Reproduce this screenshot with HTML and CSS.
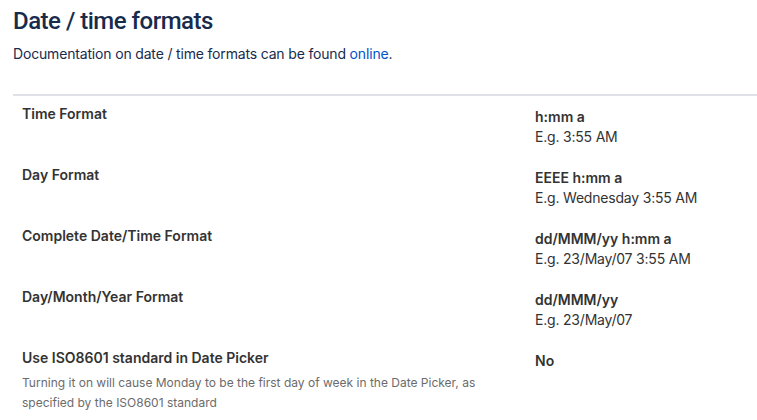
FILE: index.html
```html
<!DOCTYPE html>
<html lang="en">
<head>
<meta charset="utf-8">
<title>Date / time formats</title>
<link rel="stylesheet" href="styles.css">
</head>
<body>
<main class="page">
  <h1 class="title">Date / time formats</h1>
  <p class="intro">Documentation on date / time formats can be found <a class="link" href="#">online</a>.</p>
  <div class="settings">
    <div class="row">
      <div class="label">Time Format</div>
      <div class="value"><div class="fmt">h:mm a</div><div class="example">E.g. 3:55 AM</div></div>
    </div>
    <div class="row">
      <div class="label">Day Format</div>
      <div class="value"><div class="fmt">EEEE h:mm a</div><div class="example">E.g. Wednesday 3:55 AM</div></div>
    </div>
    <div class="row">
      <div class="label">Complete Date/Time Format</div>
      <div class="value"><div class="fmt">dd/MMM/yy h:mm a</div><div class="example">E.g. 23/May/07 3:55 AM</div></div>
    </div>
    <div class="row">
      <div class="label">Day/Month/Year Format</div>
      <div class="value"><div class="fmt">dd/MMM/yy</div><div class="example">E.g. 23/May/07</div></div>
    </div>
    <div class="row">
      <div class="label">Use ISO8601 standard in Date Picker
        <div class="desc">Turning it on will cause Monday to be the first day of week in the Date Picker, as specified by the ISO8601 standard</div>
      </div>
      <div class="value"><div class="fmt">No</div></div>
    </div>
  </div>
</main>
</body>
</html>
```
FILE: styles.css
```css
html, body {
  margin: 0;
  padding: 0;
  background: #ffffff;
}

body {
  font-family: Inter, "Liberation Sans", Arial, sans-serif;
  font-size: 14px;
  line-height: 20px;
  color: #333333;
}

.page {
  padding: 0 0 0 13px;
}

.title {
  margin: 0;
  padding-top: 6px;
  font-family: Roboto, Inter, "Liberation Sans", Arial, sans-serif;
  font-size: 24px;
  line-height: 30px;
  font-weight: 500;
  letter-spacing: -0.5px;
  color: #172b4d;
}

.intro {
  margin: 8px 0 0;
  color: #172b4d;
  font-size: 14px;
  line-height: 20px;
  letter-spacing: -0.17px;
}

.link {
  color: #0052cc;
  text-decoration: none;
}

.settings {
  margin-top: 30px;
  border-top: 2px solid #dfe1e6;
}

.row {
  display: grid;
  grid-template-columns: 513px 1fr;
  padding: 8px 0 10px 9px;
}

.label {
  font-weight: 600;
  color: #333333;
}

.value {
  margin-top: 3px;
}

.fmt {
  font-weight: 600;
}

.example {
  font-weight: 400;
  letter-spacing: -0.2px;
}

.desc {
  margin-top: 5px;
  max-width: 470px;
  font-size: 12px;
  line-height: 20px;
  font-weight: 400;
  color: #6b6b6b;
}
```
